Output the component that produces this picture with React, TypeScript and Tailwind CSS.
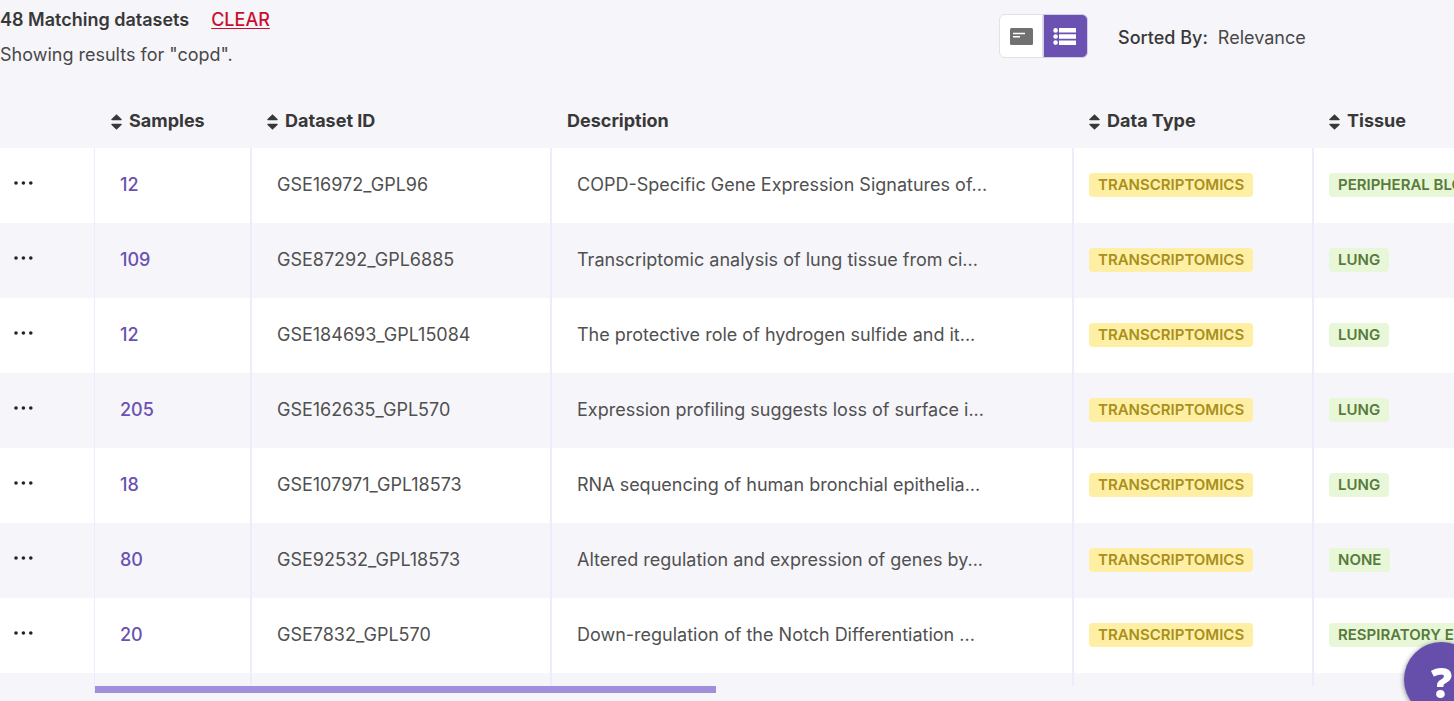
type Dataset = {
  samples: number;
  id: string;
  description: string;
  dataType: string;
  tissue: string;
};

const datasets: Dataset[] = [
  { samples: 12, id: "GSE16972_GPL96", description: "COPD-Specific Gene Expression Signatures of...", dataType: "TRANSCRIPTOMICS", tissue: "PERIPHERAL BLOOD" },
  { samples: 109, id: "GSE87292_GPL6885", description: "Transcriptomic analysis of lung tissue from ci...", dataType: "TRANSCRIPTOMICS", tissue: "LUNG" },
  { samples: 12, id: "GSE184693_GPL15084", description: "The protective role of hydrogen sulfide and it...", dataType: "TRANSCRIPTOMICS", tissue: "LUNG" },
  { samples: 205, id: "GSE162635_GPL570", description: "Expression profiling suggests loss of surface i...", dataType: "TRANSCRIPTOMICS", tissue: "LUNG" },
  { samples: 18, id: "GSE107971_GPL18573", description: "RNA sequencing of human bronchial epithelia...", dataType: "TRANSCRIPTOMICS", tissue: "LUNG" },
  { samples: 80, id: "GSE92532_GPL18573", description: "Altered regulation and expression of genes by...", dataType: "TRANSCRIPTOMICS", tissue: "NONE" },
  { samples: 20, id: "GSE7832_GPL570", description: "Down-regulation of the Notch Differentiation ...", dataType: "TRANSCRIPTOMICS", tissue: "RESPIRATORY EPITHELIUM" },
];

function SortHeader({ label }: { label: string }) {
  return (
    <button type="button" className="flex items-center gap-[7px] font-bold">
      <svg width="11" height="16" viewBox="0 0 11 16" fill="currentColor" aria-hidden="true" className="mt-0.5">
        <path d="M5.5 0.3 10.7 5.2Q11 6.2 9.9 6.2H1.1Q0 6.2 .3 5.2Z" />
        <path d="M5.5 15.7 10.7 10.8Q11 9.8 9.9 9.8H1.1Q0 9.8 .3 10.8Z" />
      </svg>
      {label}
    </button>
  );
}

function Header() {
  return (
    <header className="flex h-[95px] items-start">
      <div className="w-[999px] shrink-0 pt-2">
        <div className="flex items-center gap-[22px] leading-6">
          <h1 className="font-semibold">48 Matching datasets</h1>
          <button type="button" className="font-medium text-[#c8102e] underline underline-offset-2">
            CLEAR
          </button>
        </div>
        <p className="mt-[11px] leading-6 text-[#484848]">Showing results for "copd".</p>
      </div>
      <div className="mt-[14px] flex items-center">
        <button type="button" aria-label="Card view" className="flex h-11 w-11 items-center justify-center rounded-l-md border border-[#e2e2e2] bg-white">
          <svg width="23" height="17" viewBox="0 0 23 17" aria-hidden="true">
            <rect width="23" height="17" rx="1.5" fill="#707070" />
            <path d="M3 5.5h12M3 8.8h7" stroke="#fff" strokeWidth="1.4" />
          </svg>
        </button>
        <button type="button" aria-label="List view" className="flex h-11 w-[45px] items-center justify-center rounded-r-md border border-[#d4cce9] bg-[#6a51b2] pr-[3px]">
          <svg width="23" height="17" viewBox="0 0 23 17" fill="#fff" aria-hidden="true">
            <circle cx="2.6" cy="2.4" r="2.3" />
            <circle cx="2.6" cy="8.5" r="2.3" />
            <circle cx="2.6" cy="14.6" r="2.3" />
            <path d="M6 0H23v4.6H6zM6 6.2H23v4.6H6zM6 12.4H23v4.6H6z" />
          </svg>
        </button>
      </div>
      <div className="mt-[26px] ml-[30px] flex gap-[10px] leading-6 whitespace-nowrap">
        <span className="font-medium">Sorted By:</span>
        <span className="text-[#484848]">Relevance</span>
      </div>
    </header>
  );
}

const lineCell = "border-r-2 border-[#eeebfb] pb-0.5";

export default function App() {
  return (
    <div className="min-h-screen overflow-hidden bg-[#f6f5fa] font-['Inter',sans-serif] text-lg text-[#383838]">
      <Header />
      <table className="w-full min-w-[1614px] table-fixed border-separate border-spacing-0 text-left">
        <colgroup>
          <col className="w-[95px]" />
          <col className="w-[157px]" />
          <col className="w-[300px]" />
          <col className="w-[522px]" />
          <col className="w-[240px]" />
          <col className="w-[300px]" />
        </colgroup>
        <thead>
          <tr className="h-[53px]">
            <th aria-label="Actions" />
            <th className="pb-0.5 pl-4"><SortHeader label="Samples" /></th>
            <th className="pb-0.5 pl-[15px]"><SortHeader label="Dataset ID" /></th>
            <th className="pb-0.5 pl-[15px] font-bold">Description</th>
            <th className="pb-0.5 pl-[15px]"><SortHeader label="Data Type" /></th>
            <th className="pb-0.5 pl-[15px]"><SortHeader label="Tissue" /></th>
          </tr>
        </thead>
        <tbody>
          {datasets.map((d) => (
            <tr key={d.id} className="h-[75px] odd:bg-white">
              <td className="border-r border-[#eeebfb] pb-0.5 pl-[13px]">
                <button type="button" aria-label={`Actions for ${d.id}`} className="flex">
                  <svg width="20" height="8" viewBox="0 0 20 8" fill="#222" aria-hidden="true">
                    <circle cx="3" cy="2" r="1.8" />
                    <circle cx="10.4" cy="2" r="1.8" />
                    <circle cx="17.8" cy="2" r="1.8" />
                  </svg>
                </button>
              </td>
              <td className={`${lineCell} pl-[25px]`}>
                <a href={`#${d.id}`} className="font-medium text-[#6a51b2]">{d.samples}</a>
              </td>
              <td className={`${lineCell} pl-[25px] text-[#505050]`}>{d.id}</td>
              <td className={`${lineCell} pl-[25px] whitespace-nowrap text-[#505050]`}>{d.description}</td>
              <td className={`${lineCell} pl-[15px]`}>
                <span className="flex h-6 w-fit items-center rounded bg-[#ffefa5] px-[9px] text-[15px] font-semibold text-[#a8901c]">{d.dataType}</span>
              </td>
              <td className="pb-0.5 pl-[15px]">
                <span className="flex h-6 w-fit items-center rounded bg-[#e7f7d8] px-[9px] text-[15px] font-semibold whitespace-nowrap text-[#587a3a]">{d.tissue}</span>
              </td>
            </tr>
          ))}
          <tr className="h-[13px]" aria-hidden="true">
            <td className="border-r border-[#eeebfb]" />
            <td className={lineCell} />
            <td className={lineCell} />
            <td className={lineCell} />
            <td className={lineCell} />
            <td />
          </tr>
        </tbody>
      </table>
      <div className="ml-[94px] border-l border-[#eeebfb]">
        <div className="h-[7px] w-[45.7%] bg-[#a28fdc]" />
      </div>
      <button type="button" aria-label="Help" className="fixed -right-[25px] -bottom-4 flex size-[75px] items-center justify-center rounded-full bg-[#664fab] pt-1 font-['Open_Sans',sans-serif] text-[42px] font-extrabold text-white shadow-[0_1px_5px_rgba(0,0,0,0.5)]">
        ?
      </button>
    </div>
  );
}
